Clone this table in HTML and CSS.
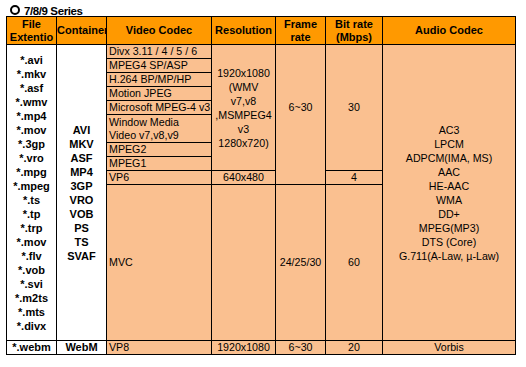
FILE: index.html
```html
<!DOCTYPE html>
<html>
<head>
<meta charset="utf-8">
<link rel="stylesheet" href="styles.css">
</head>
<body>
<div class="title"><span class="ring"></span><span class="title-text">7/8/9 Series</span></div>
<table class="spec">
<colgroup>
<col class="c-ext"><col class="c-cont"><col class="c-vid"><col class="c-res"><col class="c-fr"><col class="c-br"><col class="c-aud">
</colgroup>
<thead>
<tr class="h">
<th>File<br>Extentio</th>
<th class="left"><div class="clip">Container</div></th>
<th>Video Codec</th>
<th>Resolution</th>
<th>Frame<br>rate</th>
<th>Bit rate<br>(Mbps)</th>
<th>Audio Codec</th>
</tr>
</thead>
<tbody>
<tr class="r">
<td rowspan="10" class="ext tall">*.avi<br>*.mkv<br>*.asf<br>*.wmv<br>*.mp4<br>*.mov<br>*.3gp<br>*.vro<br>*.mpg<br>*.mpeg<br>*.ts<br>*.tp<br>*.trp<br>*.mov<br>*.flv<br>*.vob<br>*.svi<br>*.m2ts<br>*.mts<br>*.divx</td>
<td rowspan="10" class="cont tall">AVI<br>MKV<br>ASF<br>MP4<br>3GP<br>VRO<br>VOB<br>PS<br>TS<br>SVAF</td>
<td class="vc">Divx 3.11 / 4 / 5 / 6</td>
<td rowspan="8" class="mid tall">1920x1080<br>(WMV<br>v7,v8<br>,MSMPEG4<br>v3<br>1280x720)</td>
<td rowspan="9" class="mid fr">6~30</td>
<td rowspan="8" class="mid">30</td>
<td rowspan="10" class="mid tall">AC3<br>LPCM<br>ADPCM(IMA, MS)<br>AAC<br>HE-AAC<br>WMA<br>DD+<br>MPEG(MP3)<br>DTS (Core)<br>G.711(A-Law, µ-Law)</td>
</tr>
<tr class="r"><td class="vc">MPEG4 SP/ASP</td></tr>
<tr class="r"><td class="vc">H.264 BP/MP/HP</td></tr>
<tr class="r"><td class="vc">Motion JPEG</td></tr>
<tr class="r"><td class="vc">Microsoft MPEG-4 v3</td></tr>
<tr class="r2"><td class="vc">Window Media<br>Video v7,v8,v9</td></tr>
<tr class="r"><td class="vc">MPEG2</td></tr>
<tr class="r"><td class="vc">MPEG1</td></tr>
<tr class="r"><td class="vc">VP6</td><td class="mid">640x480</td><td class="mid">4</td></tr>
<tr class="mvc"><td class="vc">MVC</td><td class="mid"></td><td class="mid">24/25/30</td><td class="mid">60</td></tr>
<tr class="r"><td class="ext">*.webm</td><td class="cont">WebM</td><td class="vc">VP8</td><td class="mid">1920x1080</td><td class="mid">6~30</td><td class="mid">20</td><td class="mid">Vorbis</td></tr>
</tbody>
</table>
</body>
</html>
```
FILE: styles.css
```css
html, body {
  margin: 0;
  padding: 0;
  background: #ffffff;
}
body {
  font-family: "Liberation Sans", Arial, sans-serif;
  color: #000000;
}
.title {
  height: 16px;
  display: flex;
  align-items: flex-end;
  padding-left: 10px;
  gap: 4px;
  box-sizing: border-box;
}
.ring {
  width: 10px;
  height: 10px;
  box-sizing: border-box;
  border: 2px solid #000000;
  border-radius: 50%;
  margin-bottom: 1px;
}
.title-text {
  font-size: 11.5px;
  font-weight: bold;
  letter-spacing: -0.4px;
  line-height: 10px;
}
.spec {
  margin-left: 6px;
  border-collapse: collapse;
  table-layout: fixed;
  width: 509px;
}
.c-ext { width: 50px; }
.c-cont { width: 50px; }
.c-vid { width: 105px; }
.c-res { width: 64px; }
.c-fr { width: 50px; }
.c-br { width: 57px; }
.c-aud { width: 133px; }
.spec th, .spec td {
  border: 1px solid #000000;
  padding: 0 1px;
  vertical-align: middle;
  line-height: 13px;
  overflow: hidden;
  white-space: nowrap;
}
.spec th {
  background: #ff9900;
  font-weight: bold;
  font-size: 11px;
  text-align: center;
}
.spec th.left {
  padding: 0;
  text-align: left;
}
.clip {
  overflow: hidden;
  white-space: nowrap;
}
.spec td {
  background: #fac090;
  font-size: 10.67px;
}
.spec td.ext, .spec td.cont {
  background: #ffffff;
  font-weight: bold;
  font-size: 11px;
  text-align: center;
}
.spec td.vc {
  text-align: left;
  padding-left: 2px;
}
.spec td.mid {
  text-align: center;
}
.spec td.tall {
  line-height: 14px;
}
.spec td.fr {
  padding-bottom: 14px;
}
.h { height: 28px; }
.r { height: 14px; }
.r2 { height: 28px; }
.mvc { height: 156px; }
```
